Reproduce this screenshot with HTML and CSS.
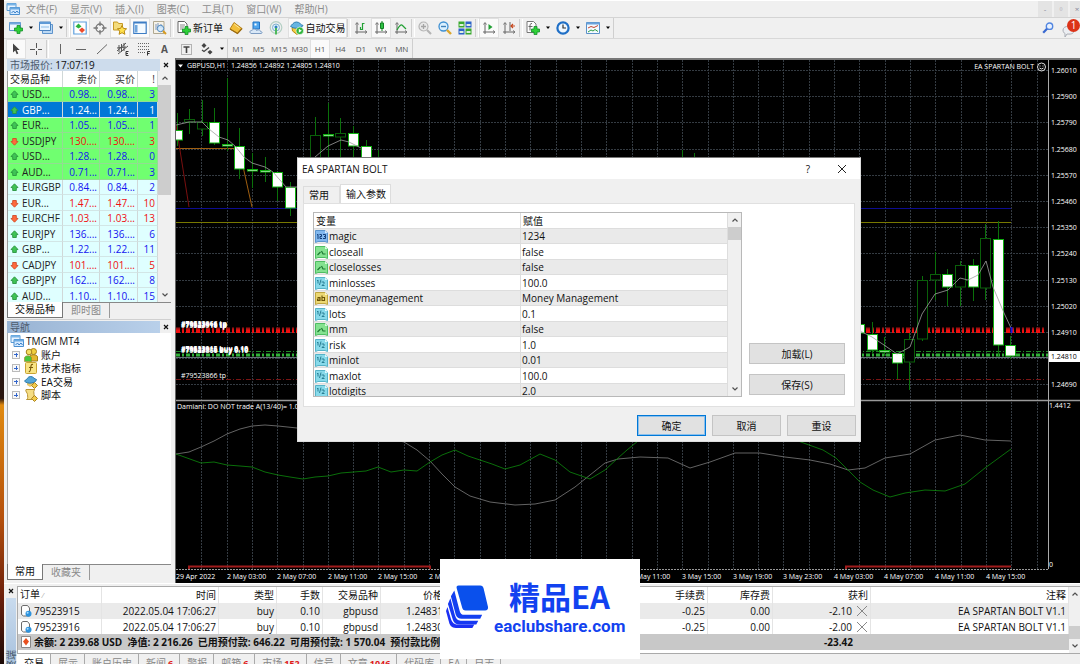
FILE: index.html
```html
<!DOCTYPE html>
<html lang="zh-CN">
<head>
<meta charset="utf-8">
<title>TMGM MT4</title>
<link rel="stylesheet" href="styles.css">
</head>
<body>
<svg class="defs" aria-hidden="true">
  <symbol id="up" viewBox="0 0 9 9"><path d="M4.500 .8 8 4.500 6.300 4.700V7.500H2.700V4.700L1 4.500Z" fill="#3fc455" stroke="#2b9440" stroke-width=".9"/></symbol>
  <symbol id="dn" viewBox="0 0 9 9"><path d="M4.500 8.200 8 4.500 6.300 4.300V1.500H2.700V4.300L1 4.500Z" fill="#ff6a3c" stroke="#d04c28" stroke-width=".9"/></symbol>
  <symbol id="chevup" viewBox="0 0 8 8"><path d="M1.500 5.500 4 3l2.500 2.500" fill="none" stroke="#505050" stroke-width="1.200"/></symbol>
  <symbol id="chevdn" viewBox="0 0 8 8"><path d="M1.500 2.500 4 5l2.500-2.500" fill="none" stroke="#505050" stroke-width="1.200"/></symbol>
  <symbol id="caret" viewBox="0 0 6 4"><path d="M1 .5h4L3 3Z" fill="#000"/></symbol>
  <symbol id="x" viewBox="0 0 8 8"><path d="M2 2l4 4m0-4-4 4" fill="none" stroke="#111" stroke-width="1.200"/></symbol>
  <symbol id="plus" viewBox="0 0 9 9"><path d="M3 .5h3V3h2.500v3H6v2.500H3V6H.5V3H3Z" fill="#2fd038" stroke="#12902a" stroke-width=".8"/></symbol>
  <symbol id="windows" viewBox="0 0 14 14"><path d="M1 1.500h9v7H1Z" fill="#e9f4ff" stroke="#5a9bd5"/><path d="M1 1.500h9v2H1Z" fill="#79b4e6"/><path d="M4 5.500h9.500v7H4Z" fill="#d5eaff" stroke="#4a8fd0"/><path d="M4 5.500h9.500v2H4Z" fill="#6aa9e0"/><path d="M5.500 11l2-2 1.500 2 2-2 1.500 2" fill="none" stroke="#3a80c8"/></symbol>
  <symbol id="bool" viewBox="0 0 13 13"><path d="M.5.5h9.500l2.500 2.500v9.500l-2.500-1H3l-2.500 1Z" fill="#84e290" stroke="#4ebd62"/><path d="M10 .5v2.500h2.500" fill="#d8ffdc"/><path d="M2.500 9 5.500 6M6.500 5l1.500 3h2.500" fill="none" stroke="#1d7a32" stroke-width="1.200"/></symbol>
  <symbol id="dbl" viewBox="0 0 13 13"><path d="M.5.5h9.500l2.500 2.500v9.500l-2.500-1H3l-2.500 1Z" fill="#88daea" stroke="#56b3c8"/><path d="M10 .5v2.500h2.500" fill="#dff9ff"/><path d="M2 4l1-1v3.500M6 2.500 4.500 8M6.500 5h2.500v1.500L7 8.500h2.500" fill="none" stroke="#287f94"/></symbol>
  <symbol id="int" viewBox="0 0 13 13"><path d="M.5.5h9.500l2.500 2.500v9.500l-2.500-1H3l-2.500 1Z" fill="#82b8ee" stroke="#5a94cc"/><path d="M10 .5v2.500h2.500" fill="#d9ecff"/><path d="M2 5l1-.7V9M4.500 4.500H6.500V6.500H5V8.500H7M8 4.500h2.500V6.500H9M10.500 6.500v2H8" fill="none" stroke="#123f7a"/></symbol>
  <symbol id="str" viewBox="0 0 13 13"><path d="M.5.5h9.500l2.500 2.500v9.500l-2.500-1H3l-2.500 1Z" fill="#ecd873" stroke="#c0a640"/><path d="M10 .5v2.500h2.500" fill="#fff7cc"/><path d="M2.500 5.500h2.500v3H2.500V7H5M7 3.500v5h2.500v-3H7" fill="none" stroke="#6c5408" stroke-width="1.100"/></symbol>
  <symbol id="order" viewBox="0 0 12 12"><path d="M1.500 1.500v8l2 1.500h6V3L7.500.5H3Z" fill="#fdfdfd" stroke="#6b6b6b"/><circle cx="8.500" cy="8.800" r="3" fill="#2d93dd"/><circle cx="7.600" cy="7.800" r="1" fill="#a9dcff"/></symbol>
</svg>

<div class="app">
  <nav class="menu">
    <svg class="i14"><use href="#windows"/></svg>
    <a href="#">文件(F)</a><a href="#">显示(V)</a><a href="#">插入(I)</a><a href="#">图表(C)</a><a href="#">工具(T)</a><a href="#">窗口(W)</a><a href="#">帮助(H)</a>
    <span class="winbtns">
      <button aria-label="最小化">-</button><button aria-label="还原">▫</button><button aria-label="关闭">×</button>
    </span>
  </nav>

  <div class="bar bar1">
    <button class="tb" aria-label="新图表"><svg class="i14" viewBox="0 0 14 14"><path d="M.5 1.500h11v8H.5Z" fill="#eef6ff" stroke="#5f94cc"/><path d="M.5 1.500h11v2H.5Z" fill="#72a8de"/><use href="#plus" x="5" y="4" width="9" height="9"/></svg></button>
    <button class="cr" aria-label="展开"><svg><use href="#caret"/></svg></button>
    <button class="tb" aria-label="配置"><svg class="i14" viewBox="0 0 14 14"><path d="M3.500 3.500h10v9h-10Z" fill="#bcd9f4" stroke="#5f94cc"/><path d="M.5 1h11v8.500H.5Z" fill="#eaf5ff" stroke="#4a84c0"/><path d="M.5 1h11v2H.5Z" fill="#5f9ad6"/><path d="M2 6h8" stroke="#8bbce8"/></svg></button>
    <button class="cr" aria-label="展开"><svg><use href="#caret"/></svg></button>
    <i class="sep"></i>
    <button class="tb on" aria-label="市场报价"><svg class="i14" viewBox="0 0 14 14"><path d="M.8 1h12.400v12H.8Z" fill="#fff" stroke="#5fa0de" stroke-width="1.200"/><path d="M2.500 5.500 5.500 2.500 8.500 5.500 5.500 7.500Z" fill="#2cb23e"/><path d="M6 9 9 6.500 12 9 9 12Z" fill="#ee4b2b"/></svg></button>
    <button class="tb" aria-label="数据窗口"><svg class="i14" viewBox="0 0 14 14"><circle cx="7" cy="7" r="4" fill="none" stroke="#777" stroke-width="1.300"/><path d="M7 .5V5M7 9v4.500M.5 7H5M9 7h4.500" stroke="#777" stroke-width="1.300"/></svg></button>
    <button class="tb on" aria-label="导航"><svg class="i14" viewBox="0 0 14 14"><path d="M.5 9V1h4l1 1.500h4V9Z" fill="#f4dc7c" stroke="#c79a24"/><path d="M9 4.500l1.400 2.900 3.200.4-2.400 2.200.7 3.300L9 11.700l-2.900 1.600.7-3.300-2.400-2.200 3.200-.4Z" fill="#ffe14d" stroke="#b98a12"/></svg></button>
    <button class="tb on" aria-label="终端"><svg class="i14" viewBox="0 0 14 14"><path d="M.8 1h12.400v11.500H.8Z" fill="#f4faff" stroke="#3c7cc4" stroke-width="1.200"/><path d="M1 1h12v1.500H1Z" fill="#3c7cc4"/><path d="M2 4h2.500v7.500H2Z" fill="#6ea7dd"/></svg></button>
    <button class="tb" aria-label="策略测试"><svg class="i14" viewBox="0 0 14 14"><path d="M.5.500h10.500v12H.5Z" fill="#f6f2e8" stroke="#b0a890"/><path d="M3 3v6M5 2v6M8 3v4" stroke="#7f98bd"/><circle cx="7.500" cy="7.500" r="3.200" fill="#cfe8ff" fill-opacity=".8" stroke="#4c87bf"/><path d="M10 10l3 3" stroke="#d69b20" stroke-width="2"/></svg></button>
    <i class="sep"></i>
    <button class="txt"><svg class="i14" viewBox="0 0 14 14"><path d="M1 .5h6.500L10 3v8.500H1Z" fill="#fff" stroke="#666"/><path d="M3 4h5M3 6h4M3 8h3" stroke="#888"/><use href="#plus" x="5" y="5" width="9" height="9"/></svg>新订单</button>
    <button class="tb" aria-label="MetaEditor"><svg class="i14" viewBox="0 0 14 14"><path d="M5 1.500 13 7.500 8.500 12.500 1 8Z" fill="#f2bf3a" stroke="#b9841c"/><path d="M1 8l7.500 4.500L13 7.500" fill="none" stroke="#9b6c14" stroke-width="1.300"/><path d="M5.200 3 10.500 7" stroke="#ffe89c"/></svg></button>
    <button class="tb" aria-label="服务"><svg class="i14" viewBox="0 0 14 14"><path d="M4 1h6.500v7H4Z" fill="#4fa6ee" stroke="#2374c4"/><path d="M5.500 2.500h2v2h-2Z" fill="#fff"/><path d="M2 12.500c-2-1-1-3.500 1-3 .5-2 4-2 4.500 0 2-1.500 4-.5 4 1 2 0 2 2 .5 2Z" fill="#d9e8f7" stroke="#7d9cc2"/></svg></button>
    <button class="tb" aria-label="信号"><svg class="i14" viewBox="0 0 14 14"><circle cx="7" cy="6.500" r="5.800" fill="none" stroke="#b4cfc4" stroke-width="1.200"/><circle cx="7" cy="6.500" r="3.500" fill="#dff2f9" stroke="#7fb0cf"/><circle cx="7" cy="6" r="1.500" fill="#2f80c0"/><path d="M7 7v6.500" stroke="#4fb95c" stroke-width="2"/></svg></button>
    <button class="txt auto on"><svg class="i14" viewBox="0 0 14 14"><path d="M2 6.500h9.500v3L7 13.500 2.500 10Z" fill="#f3cc3e" stroke="#b88a18"/><path d="M.5 5c2-1 2.500-4 6-4s4 3 6.500 3.500c-1 3-10.500 4-12.500.5Z" fill="#66b5e2" stroke="#2f7eb0"/><circle cx="9.800" cy="9.800" r="3.800" fill="#2fb53c" stroke="#fff" stroke-width=".6"/><path d="M8.800 7.800v4l3-2Z" fill="#fff"/></svg>自动交易</button>
    <i class="sep"></i>
    <button class="tb" aria-label="柱状图"><svg class="i14" viewBox="0 0 14 14"><path d="M3 2v11M1 11h12" stroke="#666"/><path d="M1.500 3.500 3 1.500l1.500 2M11 9.500 13 11l-2 1.500" fill="none" stroke="#777"/><path d="M6.500 9V6M8.500 9V2.500h2M6 8.500h2.500" fill="none" stroke="#22a034" stroke-width="1.200"/></svg></button>
    <button class="tb on" aria-label="蜡烛图"><svg class="i14" viewBox="0 0 14 14"><path d="M3 2v11M1 11h12" stroke="#666"/><path d="M1.500 3.500 3 1.500l1.500 2M11 9.500 13 11l-2 1.500" fill="none" stroke="#777"/><path d="M8 0v10" stroke="#128022"/><path d="M6.500 2h3v5.500h-3Z" fill="#2cc142" stroke="#128022"/></svg></button>
    <button class="tb" aria-label="折线图"><svg class="i14" viewBox="0 0 14 14"><path d="M3 2v11M1 11h12" stroke="#666"/><path d="M1.500 3.500 3 1.500l1.500 2M11 9.500 13 11l-2 1.500" fill="none" stroke="#777"/><path d="M3 9C5 5 7 3 8.500 4.500L12 8" fill="none" stroke="#22a034" stroke-width="1.200"/></svg></button>
    <i class="sep"></i>
    <button class="tb" aria-label="放大"><svg class="i14" viewBox="0 0 14 14"><circle cx="5.500" cy="5.500" r="4.500" fill="#e9e9e9" stroke="#b4b4b4" stroke-width="1.200"/><path d="M3 5.500h5M5.500 3v5" stroke="#a4a4a4" stroke-width="1.300"/><path d="M9 9l4 4" stroke="#b4b4b4" stroke-width="2.200"/></svg></button>
    <button class="tb" aria-label="缩小"><svg class="i14" viewBox="0 0 14 14"><circle cx="5.500" cy="5.500" r="4.500" fill="#dbf0ff" stroke="#3f90d2" stroke-width="1.300"/><path d="M3 5.500h5" stroke="#3f80b8" stroke-width="1.400"/><path d="M9 9l4 4" stroke="#dca62c" stroke-width="2.400"/></svg></button>
    <button class="tb" aria-label="平铺"><svg class="i14" viewBox="0 0 14 14"><path d="M.5.5h6v6h-6Z" fill="#3aa92f"/><path d="M7.500.5h6v6h-6Z" fill="#2d63c8"/><path d="M.5 7.500h6v6h-6Z" fill="#2d63c8"/><path d="M7.500 7.500h6v6h-6Z" fill="#3aa92f"/><path d="M1.500 3h4v2h-4ZM8.500 3h4v2h-4ZM1.500 10h4v2h-4ZM8.500 10h4v2h-4Z" fill="#dff0e0"/></svg></button>
    <i class="sep"></i>
    <button class="tb on" aria-label="自动滚动"><svg class="i14" viewBox="0 0 14 14"><path d="M3 2v11M1 11h12" stroke="#666"/><path d="M1.500 3.500 3 1.500l1.500 2M11 9.500 13 11l-2 1.500" fill="none" stroke="#777"/><path d="M6.500 3v6l4-3Z" fill="#22a034"/></svg></button>
    <button class="tb" aria-label="图表平移"><svg class="i14" viewBox="0 0 14 14"><path d="M3 2v11M1 11h12M8 1v9" stroke="#666"/><path d="M1.500 3.500 3 1.500l1.500 2M11 9.500 13 11l-2 1.500" fill="none" stroke="#777"/><path d="M13 5H9.500M11 3 9 5l2 2" fill="none" stroke="#c6461c" stroke-width="1.200"/></svg></button>
    <i class="sep"></i>
    <button class="tb" aria-label="指标"><svg class="i14" viewBox="0 0 14 14"><path d="M1 .5h6.500L10 3v8.500H1Z" fill="#fff" stroke="#777"/><path d="M6 2.500c-2 0-2 1-2 3v4M2.500 5.500h4" fill="none" stroke="#666"/><use href="#plus" x="5" y="5" width="9" height="9"/></svg></button>
    <button class="cr" aria-label="展开"><svg><use href="#caret"/></svg></button>
    <button class="tb" aria-label="周期"><svg class="i14" viewBox="0 0 14 14"><circle cx="7" cy="7" r="5.600" fill="#eef7ff" stroke="#1f6fc6" stroke-width="2.200"/><path d="M7 3.500V7h3" fill="none" stroke="#333" stroke-width="1.200"/></svg></button>
    <button class="cr" aria-label="展开"><svg><use href="#caret"/></svg></button>
    <button class="tb" aria-label="模板"><svg class="i14" viewBox="0 0 14 14"><path d="M.5 1.500h13v11H.5Z" fill="#f4f9ff" stroke="#5b91c8"/><path d="M.5 1.500h13v2H.5Z" fill="#6ba3dc"/><path d="M2 7l3-1.500L8 6.500l4-2" fill="none" stroke="#c3462e"/><path d="M2 11l3-2 2 1 2-1.500 3 2" fill="none" stroke="#2f9f43"/></svg></button>
    <button class="cr" aria-label="展开"><svg><use href="#caret"/></svg></button>
    <i class="end"></i>
    <span class="right">
      <button class="tb" aria-label="搜索"><svg class="i12" viewBox="0 0 12 12"><circle cx="7.500" cy="4.200" r="3.200" fill="#e8f1ff" stroke="#5286e0" stroke-width="1.400"/><path d="M5 6.800 1.200 10.800" stroke="#3868d0" stroke-width="2.200"/></svg></button>
      <button class="note" aria-label="通知"><svg class="i14" viewBox="0 0 14 14"><path d="M1 6c0-5 11-5 11 0s-5 4-7 4l-2 3V9.500C2 9 1 8 1 6Z" fill="#eceef2" stroke="#a9adb5"/></svg><b>1</b></button>
    </span>
  </div>

  <div class="bar bar2">
    <button class="tb on" aria-label="光标"><svg class="i12" viewBox="0 0 12 12"><path d="M3 .5v9l2.200-2 1.500 3.800 1.600-.7-1.600-3.600h3Z" fill="#444"/></svg></button>
    <button class="tb" aria-label="十字线"><svg class="i12" viewBox="0 0 12 12"><path d="M6.500 0v5M6.500 8v4M0 6.500h5M8 6.500h4" stroke="#555"/></svg></button>
    <i class="sep thin"></i>
    <span class="draw">
      <button aria-label="垂直线"><svg class="i12" viewBox="0 0 12 12"><path d="M6.500 1v10" stroke="#666"/></svg></button>
      <button aria-label="水平线"><svg class="i12" viewBox="0 0 12 12"><path d="M1 6.500h10" stroke="#666"/></svg></button>
      <button aria-label="趋势线"><svg class="i12" viewBox="0 0 12 12"><path d="M1 11 11 1.500" stroke="#666"/></svg></button>
      <button aria-label="通道"><svg class="i14" viewBox="0 0 14 14"><path d="M1 9 10 1M2 12 12 4M3 3v7M5.500 2v8M8 1v8M1 6l9-1" stroke="#555" fill="none"/><path d="M12.500 9.500H10v4h2.500M10 11.500h2" fill="none" stroke="#333"/></svg></button>
      <button aria-label="斐波那契"><svg class="i14" viewBox="0 0 14 14"><path d="M1 1.500h12M1 4.500h12M1 7.500h12M1 10.500h8" stroke="#666" stroke-dasharray="1 1"/><path d="M13 9.500h-2.500v4M10.500 11.500h2" fill="none" stroke="#333"/></svg></button>
      <button class="ltr" aria-label="文字">A</button>
      <button aria-label="标签"><svg class="i12" viewBox="0 0 12 12"><path d="M1.500 1.500h10v10h-10Z" fill="none" stroke="#777" stroke-dasharray="1 1"/><path d="M3.500 4h6M6.500 4v6" stroke="#444" stroke-width="1.600"/></svg></button>
      <button aria-label="箭头"><svg class="i12" viewBox="0 0 12 12"><path d="M3 0l2.500 2.500L3 5 .5 2.500ZM9 7l2.500 2L9 11.500 6.500 9Z" fill="#444"/><path d="M1 7l2 1.500 5-4" fill="none" stroke="#444" stroke-width="1.300"/></svg></button>
    </span>
    <button class="cr" aria-label="展开"><svg><use href="#caret"/></svg></button>
    <span class="tf"><button>M1</button><button>M5</button><button>M15</button><button>M30</button><button class="on">H1</button><button>H4</button><button>D1</button><button>W1</button><button>MN</button></span>
  </div>

  <main class="work">
    <aside class="side">
      <section class="panel market">
        <header class="cap"><span>市场报价: <em>17:07:19</em></span><button aria-label="关闭"><svg><use href="#x"/></svg></button></header>
        <div class="list">
          <table class="quotes">
            <colgroup><col class="q1"><col class="q2"><col class="q3"><col class="q4"></colgroup>
            <thead><tr><th>交易品种</th><th>卖价</th><th>买价</th><th>!</th></tr></thead>
            <tbody>
              <tr class="g"><td><svg><use href="#up"/></svg>USD...</td><td>0.98...</td><td>0.98...</td><td>3</td></tr>
              <tr class="sel"><td><svg><use href="#up"/></svg>GBP...</td><td>1.24...</td><td>1.24...</td><td>1</td></tr>
              <tr class="g"><td><svg><use href="#up"/></svg>EUR...</td><td>1.05...</td><td>1.05...</td><td>1</td></tr>
              <tr class="g r"><td><svg><use href="#dn"/></svg>USDJPY</td><td>130....</td><td>130....</td><td>3</td></tr>
              <tr class="g"><td><svg><use href="#up"/></svg>USD...</td><td>1.28...</td><td>1.28...</td><td>0</td></tr>
              <tr class="g"><td><svg><use href="#up"/></svg>AUD...</td><td>0.71...</td><td>0.71...</td><td>3</td></tr>
              <tr><td><svg><use href="#up"/></svg>EURGBP</td><td>0.84...</td><td>0.84...</td><td>2</td></tr>
              <tr class="r"><td><svg><use href="#dn"/></svg>EUR...</td><td>1.47...</td><td>1.47...</td><td>10</td></tr>
              <tr class="r"><td><svg><use href="#dn"/></svg>EURCHF</td><td>1.03...</td><td>1.03...</td><td>13</td></tr>
              <tr><td><svg><use href="#up"/></svg>EURJPY</td><td>136....</td><td>136....</td><td>6</td></tr>
              <tr><td><svg><use href="#up"/></svg>GBP...</td><td>1.22...</td><td>1.22...</td><td>11</td></tr>
              <tr class="r"><td><svg><use href="#dn"/></svg>CADJPY</td><td>101....</td><td>101....</td><td>5</td></tr>
              <tr><td><svg><use href="#up"/></svg>GBPJPY</td><td>162....</td><td>162....</td><td>8</td></tr>
              <tr><td><svg><use href="#up"/></svg>AUD...</td><td>1.10...</td><td>1.10...</td><td>15</td></tr>
            </tbody>
          </table>
          <div class="scroll"><svg><use href="#chevup"/></svg><i class="thumb tall"></i><svg><use href="#chevdn"/></svg></div>
        </div>
        <div class="tabs"><button class="cur">交易品种</button><button>即时图</button></div>
      </section>
      <section class="panel navi">
        <header class="cap strong"><span>导航</span><button aria-label="关闭"><svg><use href="#x"/></svg></button></header>
        <ul class="tree">
          <li class="root"><svg class="i14"><use href="#windows"/></svg>TMGM MT4</li>
          <li><i class="exp"></i><svg class="i14" viewBox="0 0 14 14"><circle cx="9.500" cy="3.500" r="3" fill="#f1cf3d" stroke="#a5811a"/><path d="M5.500 13V9c0-3 8-3 8 0v4Z" fill="#e4b82c" stroke="#a5811a"/><circle cx="5" cy="4" r="2.800" fill="#f5dd62" stroke="#a5811a"/><path d="M.5 13.500V10c0-3 7-3 7 0v3.500Z" fill="#49c63e" stroke="#a5811a" stroke-width=".6"/></svg>账户</li>
          <li><i class="exp"></i><svg class="i14" viewBox="0 0 14 14"><rect x="1.500" y="1.500" width="11" height="11" rx="1" fill="#f8e484" stroke="#c9a431"/><path d="M9 3.500c-2-.5-2 1-2.300 3.500S6 11 4.800 10.500M5 6.500h4" fill="none" stroke="#7a5b0b" stroke-width="1.100"/></svg>技术指标</li>
          <li><i class="exp"></i><svg class="i14" viewBox="0 0 14 14"><path d="M3 7h7v3l-4 2-3-2Z" fill="#eac96a"/><path d="M.5 6C3 5 3.500 1.500 6.500 1.500S10 4 12.500 4.500C12 8.500 3 9.500.5 6Z" fill="#55a7d8" stroke="#2a79ac"/><path d="M10.500 7.500 13.500 10.500l-3 3-3-3Z" fill="#f2cb4c" stroke="#ad8520"/></svg>EA交易</li>
          <li><i class="exp"></i><svg class="i14" viewBox="0 0 14 14"><path d="M2 1.500h9c-2 1-1 3-1 5l.5 5H2.500c2-1 1-3 1-5S1 3.500 2 1.500Z" fill="#f5dd84" stroke="#b99533"/><path d="M10.500 7.500 13.500 10.500l-3 3-3-3Z" fill="#f2cb4c" stroke="#ad8520"/></svg>脚本</li>
        </ul>
        <div class="tabs"><button class="cur">常用</button><button>收藏夹</button></div>
      </section>
    </aside>
    <svg class="chart" id="chart" viewBox="175 58 905 525" preserveAspectRatio="xMinYMin slice" role="img" aria-label="GBPUSD,H1"></svg>
  </main>

  <section class="terminal">
    <div class="spine"><button aria-label="关闭"><svg><use href="#x"/></svg></button><div><span>终端</span></div></div>
    <div class="tmain">
      <div class="tlist">
        <table class="orders">
          <colgroup><col class="o1"><col class="o2"><col class="o3"><col class="o4"><col class="o3"><col class="o5"><col class="o6"><col class="o7"><col class="o8"><col class="o9"><col></colgroup>
          <thead><tr><th>订单 <small>⁄</small></th><th>时间</th><th>类型</th><th>手数</th><th>交易品种</th><th>价格</th><th></th><th>手续费</th><th>库存费</th><th>获利</th><th>注释</th></tr></thead>
          <tbody>
            <tr class="alt"><td><svg><use href="#order"/></svg>79523915</td><td>2022.05.04 17:06:27</td><td>buy</td><td>0.10</td><td>gbpusd</td><td>1.24831</td><td></td><td>-0.25</td><td>0.00</td><td>-2.10<svg class="cx" viewBox="0 0 12 12"><path d="M1 1l10 10M11 1 1 11" stroke="#888"/></svg></td><td>EA SPARTAN BOLT V1.1</td></tr>
            <tr><td><svg><use href="#order"/></svg>79523916</td><td>2022.05.04 17:06:27</td><td>buy</td><td>0.10</td><td>gbpusd</td><td>1.24830</td><td></td><td>-0.25</td><td>0.00</td><td>-2.00<svg class="cx" viewBox="0 0 12 12"><path d="M1 1l10 10M11 1 1 11" stroke="#888"/></svg></td><td>EA SPARTAN BOLT V1.1</td></tr>
            <tr class="sum"><td colspan="9"><svg viewBox="0 0 12 12"><path d="M1.500.5h9v11h-9Z" fill="#fff" stroke="#888"/><path d="M6 2l3 3.500-3 4-3-4Z" fill="#e8501f"/></svg>余额: 2 239.68 USD&nbsp; 净值: 2 216.26&nbsp; 已用预付款: 646.22&nbsp; 可用预付款: 1 570.04&nbsp; 预付款比例: 342.96%</td><td>-23.42</td><td></td></tr>
          </tbody>
        </table>
        <div class="scroll"><svg><use href="#chevup"/></svg><i class="thumb low"></i><svg><use href="#chevdn"/></svg></div>
      </div>
      <div class="ttabs"><button class="cur">交易</button><button>展示</button><button>账户历史</button><button>新闻<b>6</b></button><button>警报</button><button>邮箱<b>6</b></button><button>市场<b>152</b></button><button>信号</button><button>文章<b>1046</b></button><button>代码库</button><button>EA</button><button>日志</button></div>
    </div>
  </section>
</div>

<section class="dialog" role="dialog" aria-labelledby="dt">
  <header><h1 id="dt">EA SPARTAN BOLT</h1><button>?</button><button aria-label="关闭"><svg class="i12" viewBox="0 0 12 12"><path d="M2 2l8 8M10 2l-8 8" stroke="#222"/></svg></button></header>
  <div class="dtabs"><button>常用</button><button class="cur">输入参数</button></div>
  <div class="page">
    <div class="params">
      <table>
        <colgroup><col class="p1"><col></colgroup>
        <thead><tr><th>变量</th><th>赋值</th></tr></thead>
        <tbody>
          <tr><td><svg><use href="#int"/></svg>magic</td><td>1234</td></tr>
          <tr><td><svg><use href="#bool"/></svg>closeall</td><td>false</td></tr>
          <tr><td><svg><use href="#bool"/></svg>closelosses</td><td>false</td></tr>
          <tr><td><svg><use href="#dbl"/></svg>minlosses</td><td>100.0</td></tr>
          <tr><td><svg><use href="#str"/></svg>moneymanagement</td><td>Money Management</td></tr>
          <tr><td><svg><use href="#dbl"/></svg>lots</td><td>0.1</td></tr>
          <tr><td><svg><use href="#bool"/></svg>mm</td><td>false</td></tr>
          <tr><td><svg><use href="#dbl"/></svg>risk</td><td>1.0</td></tr>
          <tr><td><svg><use href="#dbl"/></svg>minlot</td><td>0.01</td></tr>
          <tr><td><svg><use href="#dbl"/></svg>maxlot</td><td>100.0</td></tr>
          <tr><td><svg><use href="#dbl"/></svg>lotdigits</td><td>2.0</td></tr>
        </tbody>
      </table>
      <div class="scroll"><svg><use href="#chevup"/></svg><i class="thumb"></i><svg><use href="#chevdn"/></svg></div>
    </div>
    <div class="io"><button class="btn">加载(L)</button><button class="btn">保存(S)</button></div>
  </div>
  <footer><button class="btn main">确定</button><button class="btn">取消</button><button class="btn">重设</button></footer>
</section>

<aside class="brand">
  <svg class="mark" viewBox="0 0 44 46"><path d="M13 1h22c2 0 3 1 3.500 3l4.500 19c.5 2-1 3.500-3 3.500H20c-2 0-3-1-3.500-3L11 4c-.5-2 0-3 2-3Z" fill="#0a50ec"/><path d="M8.500 6 14 27c.8 3 2 4 5 4h18l-2 4H16c-3 0-5-1-6-4L5 12Z" fill="#1340f0"/><path d="M4.500 14 9 31c1 4 3 6 6 6h18l-2 4H14c-4 0-6-2-7-5L2 20Z" fill="#1638f2"/><path d="M1.500 23 5 35c1 4 4 6 7 6h17l-2 3.500H12C7 44.500 4 43 3 38L0 27Z" fill="#1c30f4"/></svg>
  <div><strong>精品EA</strong><span>eaclubshare.com</span></div>
</aside>
<script src="chart.js"></script>
</body>
</html>
```

FILE: styles.css
```css
* { box-sizing: border-box; }
body {
  margin: 0;
  height: 100vh;
  padding-left: 4px;
  overflow: hidden;
  position: relative;
  background: linear-gradient(#1c0f0a 0, #2a1610 60%, #e08a10 61%, #b5500c 78%, #6a1f0c 90%, #1c0a06 100%);
  font: 10px/14px "Open Sans", "Noto Sans CJK SC", sans-serif;
  color: #111;
}
button { font: inherit; color: inherit; border: 0; background: none; padding: 0; margin: 0; }
a { color: inherit; text-decoration: none; }
svg { display: block; flex: none; }
table { border-collapse: separate; border-spacing: 0; table-layout: fixed; width: 100%; }
th { font-weight: 400; }
.defs { position: absolute; width: 0; height: 0; }
.i14 { width: 14px; height: 14px; }
.i12 { width: 12px; height: 12px; }
.app { height: 100%; display: flex; flex-direction: column; background: #f0f0f0; }

.menu { display: flex; align-items: center; gap: 13px; height: 18px; padding-left: 2px; border-top: 1px solid #fff; border-bottom: 1px solid #d4d4d4; color: #8c8c8c; }
.menu > svg { margin-right: -7px; }
.winbtns { margin-left: auto; display: flex; gap: 2px; margin-right: -4px; }
.winbtns button { width: 14px; height: 16px; background: #e4e4e4; font-size: 8px; line-height: 14px; color: #889; }

.bar { display: flex; align-items: center; height: 20px; padding-left: 2px; }
.bar1 .on, .bar2 .on { background: #fafafa; box-shadow: inset 0 0 0 1px #e0e0e0; }
.bar button { height: 20px; display: flex; align-items: center; justify-content: center; }
.bar .tb { width: 20px; }
.bar .cr { width: 10px; }
.cr svg { width: 6px; height: 4px; }
.bar .txt { width: 52px; gap: 2px; white-space: nowrap; }
.bar .auto { width: 59px; margin-left: 2px; }
.sep { width: 4px; height: 18px; border-left: 1px solid #cfcfcf; border-right: 1px solid #fff; flex: none; }
.sep.thin { width: 3px; }
.end { width: 1px; height: 20px; background: #cfcfcf; }
.right { margin-left: auto; display: flex; gap: 4px; }
.bar .note { width: 18px; position: relative; justify-content: flex-start; padding-top: 6px; }
.note b { position: absolute; right: 0; top: 1px; width: 13px; height: 13px; border-radius: 50%; background: #dc3318; color: #fff; font-weight: 400; line-height: 13px; text-align: center; }
.bar2 { border-top: 1px solid #d8d8d8; color: #555; font-size: 8px; }
.draw { display: grid; grid-template-columns: repeat(8, 21px); justify-items: center; }
.draw .ltr { font-size: 10px; font-weight: 700; }
.tf { display: grid; grid-template-columns: repeat(9, 1fr); width: 186px; border-left: 1px solid #cfcfcf; border-right: 1px solid #cfcfcf; }

.work { flex: 1; min-height: 0; display: flex; }
.side { width: 171px; padding: 1px 4px 0 3px; display: flex; flex-direction: column; }
.cap { display: flex; align-items: center; height: 12px; flex: none; }
.cap span { flex: 1; height: 12px; line-height: 12px; padding-left: 3px; background: #cddcec; color: #4c5a6c; }
.cap em { font-style: normal; color: #111; }
.cap.strong span { background: linear-gradient(90deg, #98b3d3, #b9d0ea); }
.cap button { width: 11px; display: flex; justify-content: center; }
.cap svg, .spine svg { width: 8px; height: 8px; }
.panel { display: flex; flex-direction: column; }
.list { display: flex; height: 231px; overflow: hidden; background: #fff; border-left: 1px solid #999; align-items: flex-start; }
.quotes { flex: 1; color: #1414f0; }
.q1 { width: 55px; } .q2 { width: 37px; } .q3 { width: 38px; }
.quotes tr { height: 15px; }
.quotes tbody tr:nth-child(even) { height: 16px; }
.quotes thead tr { height: 16px; color: #333; }
.quotes th, .quotes td { padding: 0 2px; text-align: right; line-height: 14px; border-right: 1px solid #d0d8d8; white-space: nowrap; }
.quotes td { border-bottom: 1px solid #d2e6e6; background: #dfffff; }
.quotes th:first-child, .quotes td:first-child { text-align: left; color: #222; padding-right: 0; }
.quotes td svg { display: inline-block; width: 9px; height: 9px; vertical-align: -1px; margin: 0 3px 0 0; }
.quotes .g td { background: #70ff70; border-bottom-color: #92dd92; border-right-color: #92dd92; }
.quotes .r td { color: #f01010; }
.quotes .r td:first-child { color: #222; }
.quotes .sel td, .quotes .sel td:first-child { background: #0078d7; color: #fff; }
.scroll { width: 13px; flex: none; align-self: stretch; background: #f0f0f0; display: flex; flex-direction: column; align-items: center; padding: 3px 0; gap: 3px; }
.scroll svg { width: 8px; height: 8px; }
.thumb { width: 13px; height: 13px; background: #cdcdcd; margin-bottom: auto; }
.thumb.tall { height: 110px; }
.tabs { display: flex; height: 16px; flex: none; border-top: 1px solid #888; color: #888; }
.tabs button { padding: 0 8px; border-right: 1px solid #999; height: 15px; line-height: 13px; }
.tabs .cur { background: #fff; color: #111; border: 1px solid #777; border-top: 0; margin-top: -1px; height: 16px; padding: 0 7px; }
.navi { flex: 1; margin-top: 1px; border-top: 1px solid #d0d0d0; min-height: 0; padding: 1px 0 3px; }
.tree { flex: 1; margin: 0; padding: 1px 0 0 1px; list-style: none; background: #fff; border-left: 1px solid #aaa; overflow: hidden; }
.tree li { display: flex; align-items: center; gap: 3px; height: 13px; padding-left: 3px; }
.tree li:nth-child(odd) { height: 14px; }
.tree .root { padding-left: 1px; gap: 2px; }
.tree .exp { width: 8px; height: 8px; margin-right: 1px; border: 1px solid #bbb; background: linear-gradient(#36c, #36c) 50% 50% / 4px 1px no-repeat, linear-gradient(#36c, #36c) 50% 50% / 1px 4px no-repeat, #f8f8f8; }
.chart { flex: 1; min-width: 0; height: 100%; background: #000; font: 7px "Open Sans", "DejaVu Sans", sans-serif; }
.chart text { fill: #fff; }

.terminal { height: 81px; flex: none; display: flex; border-top: 1px solid #fff; overflow: hidden; background: #f0f0f0; }
.spine { width: 13px; display: flex; flex-direction: column; align-items: center; gap: 3px; padding-top: 3px; }
.spine div { flex: 1; width: 10px; background: linear-gradient(#c9dbee, #a9c2de); display: flex; flex-direction: column; align-items: center; justify-content: flex-end; color: #456; }
.spine span { writing-mode: vertical-rl; text-orientation: sideways; transform: rotate(180deg); line-height: 10px; margin-bottom: -6px; }
.tmain { flex: 1; min-width: 0; display: flex; flex-direction: column; }
.tlist { display: flex; height: 68px; margin-top: 2px; border: 1px solid #aaa; border-width: 1px 0 1px 1px; background: #fff; align-items: flex-start; flex: none; }
.tlist .scroll { width: 11px; }
.thumb.low { margin: auto 0 0; width: 11px; }
.o1 { width: 84px; } .o2 { width: 117px; } .o3 { width: 58px; } .o4 { width: 46px; } .o5 { width: 65px; } .o6 { width: 194px; } .o7 { width: 68px; } .o8 { width: 65px; } .o9 { width: 98px; }
.orders { flex: 1; }
.orders tr { height: 15px; }
.orders .alt, .orders .sum { height: 16px; }
.orders th, .orders td { padding: 0 2px; text-align: right; line-height: 14px; border-right: 1px solid #e4e4e4; white-space: nowrap; }
.orders th:first-child, .orders td:first-child { text-align: left; padding-right: 0; }
.orders small { font-size: 7px; color: #999; }
.orders svg { display: inline-block; width: 12px; height: 12px; vertical-align: -2px; margin-right: 2px; }
.orders svg.cx { margin: 0 0 0 4px; }
.orders .alt { background: #eaeaea; }
.orders .sum { background: #c8c8c8; font-weight: 700; }
.orders .sum td { border: 0; padding-right: 18px; overflow: hidden; }
.ttabs { display: flex; align-items: flex-start; color: #888; }
.ttabs button { padding: 2px 7px 0; white-space: nowrap; line-height: 14px; box-shadow: inset -1px 0 #aaa; }
.ttabs .cur { background: #fff; color: #111; }
.ttabs b { color: #e01818; font-size: 9px; margin-left: 2px; }

.dialog { position: absolute; left: 297px; top: 157px; width: 564px; background: #f0f0f0; border: 1px solid #ddd; border-top-color: #777; padding-bottom: 5px; }
.dialog header { display: flex; align-items: center; height: 21px; background: #fff; padding: 0 12px 0 4px; gap: 26px; }
.dialog h1 { font-size: 10px; font-weight: 400; margin: 0 auto 0 0; }
.dtabs { display: flex; align-items: flex-end; height: 24px; padding: 5px 0 0 5px; }
.dtabs button { height: 17px; padding: 0 10px 0 5px; border: 1px solid #ddd; border-bottom: 0; width: 37px; text-align: left; line-height: 14px; }
.dtabs .cur { height: 19px; width: 51px; background: #fff; padding: 0 5px; white-space: nowrap; }
.page { background: #fff; border: 1px solid #e0e0e0; margin: 0 5px 8px; padding: 8px 9px 9px; display: flex; gap: 7px; }
.params { flex: 1; height: 185px; border: 1px solid #b8b8b8; display: flex; align-items: flex-start; overflow: hidden; }
.params table { flex: 1; }
.params .p1 { width: 207px; }
.params tr { height: 15px; }
.params thead tr, .params tbody tr:nth-child(even) { height: 16px; }
.params tbody tr:nth-child(odd) { background: #eaeaea; }
.params th, .params td { padding: 0 1px; text-align: left; line-height: 14px; border-right: 1px solid #ddd; border-bottom: 1px solid #ddd; white-space: nowrap; }
.params th { padding: 0 2px; }
.params td svg { display: inline-block; width: 13px; height: 13px; vertical-align: -3px; margin-right: 1px; }
.io { width: 96px; display: flex; flex-direction: column; justify-content: flex-end; gap: 10px; padding-bottom: 2px; }
.btn { height: 21px; background: #e1e1e1; border: 1px solid #c4c4c4; line-height: 14px; }
.btn.main { border: 1px solid #0078d7; box-shadow: inset 0 0 0 1px #8cc0ec; }
.dialog footer { display: grid; grid-template-columns: repeat(3, 69px); gap: 6px; justify-content: end; padding-right: 4px; }

.brand { position: absolute; left: 440px; top: 559px; width: 200px; height: 100px; background: #fff; display: flex; gap: 5px; padding: 17px 0 0 6px; color: #1242f0; }
.mark { width: 43px; height: 46px; margin-top: 8px; }
.brand div { display: flex; flex-direction: column; }
.brand strong { font: 700 31px/40px "Noto Sans CJK SC", sans-serif; padding-left: 15px; }
.brand span { font: 700 17px/20px Roboto, sans-serif; }
```

FILE: chart.js
```js
const NS = 'http://www.w3.org/2000/svg';
const chart = document.getElementById('chart');
const add = (tag, attrs, text) => {
  const el = document.createElementNS(NS, tag);
  for (const k in attrs) el.setAttribute(k, attrs[k]);
  if (text) el.textContent = text;
  chart.appendChild(el);
};
const line = (d, stroke, extra) => add('path', { d, stroke, fill: 'none', ...extra });
const poly = (pts, stroke) => add('polyline', { points: pts, stroke, fill: 'none', 'stroke-width': 0.8 });
const label = (x, y, t, extra) => add('text', { x, y, ...extra }, t);

// Grid and price scale
for (let i = 0; i < 34; i++) {
  const x = Math.round(201.3 + i * 25.31) + 0.5;
  line(`M${x} 60V569`, '#343b42', { 'stroke-dasharray': '2 1' });
}
const prices = ['1.26010', '1.25900', '1.25790', '1.25680', '1.25570', '1.25460', '1.25350', '1.25240', '1.25130', '1.25020', '1.24910', '', '1.24690'];
prices.forEach((p, i) => {
  const y = Math.round(70 + i * 26.2) + 0.5;
  line(`M176 ${y}H1048`, '#343b42', { 'stroke-dasharray': '2 1' });
  if (p) label(1051, y + 2.5, p);
});

// Order and target levels
line('M176 208.500H1011', '#0c0c90');
line('M176 222.500H1011', '#787800');
line('M176 148.500H239L252 207', '#a05f10');
line('M176 125L189 207', '#7a1010');
line('M176 331H1045', '#f01010', { 'stroke-width': 4, 'stroke-dasharray': '4 2 2 2' });
line('M176 328.500H1045', '#a01010', { 'stroke-width': 2, 'stroke-dasharray': '4 2 2 2' });
line('M176 351.500H1048', '#208a28', { 'stroke-dasharray': '5 2 1 2' });
line('M176 355H1048', '#30b038', { 'stroke-width': 3, 'stroke-dasharray': '4 2 2 2' });
line('M176 357.500H1048', '#66707a');
line('M176 379.500H1045', '#7a1414', { 'stroke-dasharray': '5 2 1 2' });

// Candles: x, high, low, top, bottom, falling
const candles = [
  [177, 113, 146, 130, 140, 1], [189, 109, 134, 119, 122, 0], [202, 100, 136, 122, 129, 0], [214, 108, 145, 122, 143, 1],
  [227, 78, 151, 144, 146, 1], [239, 128, 179, 146, 169, 1], [252, 153, 188, 169, 171, 1], [265, 157, 182, 170, 172, 1],
  [277, 172, 201, 172, 187, 1], [290, 182, 216, 187, 208, 1], [315, 117, 158, 135, 158, 0], [328, 103, 157, 134, 136, 1],
  [340, 118, 158, 133, 137, 0], [353, 126, 158, 133, 146, 1], [366, 140, 158, 146, 162, 1], [378, 150, 165, 160, 165, 1],
  [682, 150, 170, 160, 170, 1], [694, 153, 170, 160, 170, 1], [859, 324, 334, 324, 333, 1], [872, 322, 353, 334, 350, 1],
  [884, 337, 356, 350, 352, 1], [897, 353, 379, 353, 363, 1], [909, 333, 390, 339, 362, 0], [922, 276, 341, 280, 339, 0],
  [935, 252, 300, 274, 280, 0], [947, 269, 306, 274, 287, 1], [960, 261, 306, 265, 287, 0], [973, 259, 301, 265, 287, 1],
  [985, 224, 300, 238, 288, 0], [998, 221, 357, 239, 345, 1], [1010, 336, 359, 345, 356, 1]
];
candles.forEach(([x, h, l, t, b, down]) => {
  line(`M${x + 0.5} ${h}V${l}`, '#0a700a');
  add('rect', { x: x - 4.5, y: t + 0.5, width: 10, height: Math.max(1, b - t - 0.5), fill: down ? '#fff' : '#000', stroke: down ? '#10b010' : '#0a5f0a' });
});
poly('176,125 189,122 202,122 209,129 219,137 228,140 235,146 244,157 252,163 265,167 273,172 286,187 298,187', '#a0a0a0');
poly('315,157 328,146 341,140 349,142 361,148', '#a0a0a0');
poly('860,331 872,337 884,345 897,354 910,347 922,314 935,294 948,290 960,278 968,280 978,275 986,261 993,287 1004,313 1011,328', '#a0a0a0');
line('M1011.500 327V333', '#1818e0', { 'stroke-width': 2 });

// Damiani indicator
poly('176,454 189,452 201,447 214,441 227,434 240,429 252,426 265,425 278,426 297,428 350,430 404,442 417,450 430,461 442,474 455,487 470,496 490,502 515,505 535,504 555,500 575,487 590,475 605,463 618,459 640,457 668,458 690,468 710,462 735,453 760,453 785,457 810,460 830,464 848,470 865,468 885,458 910,454 935,440 960,435 985,440 1011,441', '#7c7c7c');
poly('176,454 201,463 214,462 227,465 240,466 252,467 265,472 278,475 290,477 303,479 315,477 328,476 341,473 366,471 378,467 391,472 404,470 417,471 430,462 442,455 455,450 468,456 480,460 492,464 505,469 520,465 540,454 555,460 570,472 590,479 605,470 618,458 627,450 638,441 700,430 798,441 823,450 836,458 848,470 860,482 873,490 890,497 905,493 925,490 945,491 965,484 985,468 1011,449', '#0c8a0c');
line('M189 569V566.500H430V569', '#a01c1c', { 'stroke-width': 2 });
line('M846 569V566.500H1011', '#a01c1c', { 'stroke-width': 2 });

// Frames
add('rect', { x: 175, y: 58, width: 905, height: 2, fill: '#777' });
add('rect', { x: 175, y: 58, width: 1, height: 525, fill: '#666' });
line('M176 400.500H1080', '#999', { 'stroke-width': 1.5 });
line('M1048.500 60V569', '#aaa');
line('M176 569.500H1048', '#999', { 'stroke-dasharray': '2 1' });
add('rect', { x: 1049, y: 351, width: 31, height: 11, fill: '#fff' });
label(1051, 359, '1.24810', { style: 'fill:#000' });
label(1049, 408, '1.4412');
label(1049, 567, '0');

// Captions
line('M178 64.500h5l-2.500 3Z', 'none', { style: 'fill:#fff' });
label(187, 68, 'GBPUSD,H1');
label(231, 68, '1.24856 1.24892 1.24805 1.24810');
label(1034, 69, 'EA SPARTAN BOLT', { 'text-anchor': 'end' });
add('circle', { cx: 1041.5, cy: 67, r: 4, fill: 'none', stroke: '#ddd' });
line('M1040 65.500v1M1043 65.500v1M1039.500 68q2 2 4 0', '#ddd');
['#79523866 tp', '#79523915 tp', '#79523916 tp'].forEach((t, i) => label(181, 326 + i, t, { 'font-weight': 700 }));
['#79523915 buy 0.10', '#79523916 buy 0.10', '#79523866 buy 0.10'].forEach((t, i) => label(181, 351 + i, t, { 'font-weight': 700 }));
label(181, 378, '#79523866 tp');
label(177, 409, 'Damiani: DO NOT trade A(13/40)= 1.0');
['29 Apr 2022', '2 May 03:00', '2 May 07:00', '2 May 11:00', '2 May 15:00', '2 May 19:00', '2 May 23:00', '3 May 03:00', '3 May 07:00', '3 May 11:00', '3 May 15:00', '3 May 19:00', '3 May 23:00', '4 May 03:00', '4 May 07:00', '4 May 11:00', '4 May 15:00']
  .forEach((t, i) => label(Math.round(176 + i * 50.6), 579, t));
```
